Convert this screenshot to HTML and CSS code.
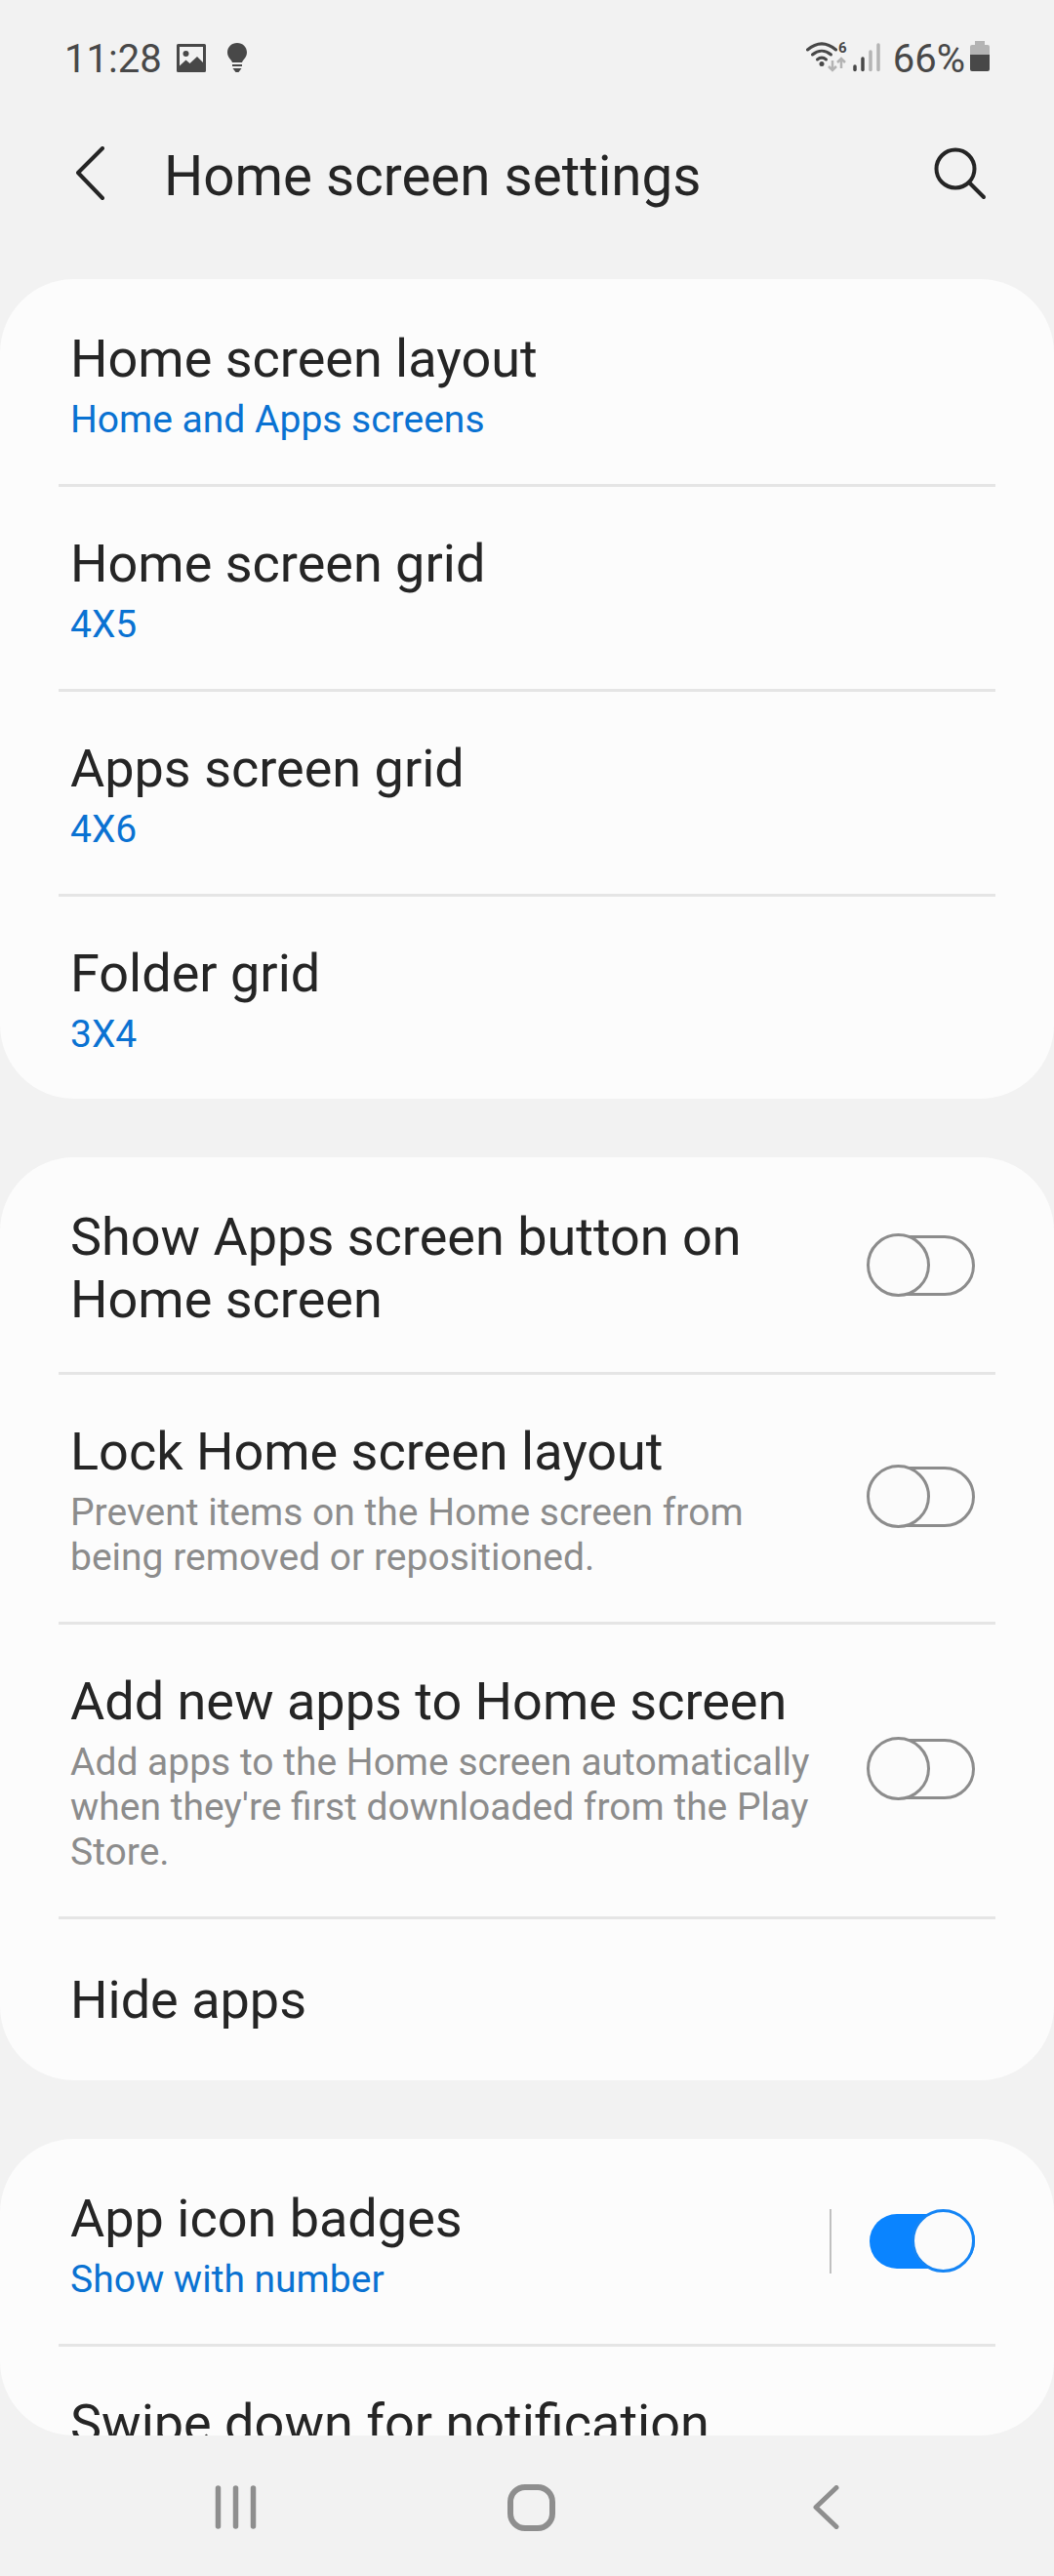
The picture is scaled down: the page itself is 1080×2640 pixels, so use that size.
FILE: index.html
```html
<!DOCTYPE html>
<html lang="en">
<head>
    <meta charset="UTF-8">
    <meta name="viewport" content="width=device-width, initial-scale=1.0">
    <title>Home screen settings</title>
    <link rel="stylesheet" href="styles.css">
</head>
<body>
    <div class="phone">
        <div class="statusbar">
            <div class="status-left">
                <span class="clock">11:28</span>
                <svg class="ic-gallery" width="30" height="29" viewBox="0 0 30 29">
                    <path fill="#484848" fill-rule="evenodd" d="M1.500 0h27A1.500 1.500 0 0 1 30 1.500v26a1.500 1.500 0 0 1-1.500 1.500h-27A1.500 1.500 0 0 1 0 27.500v-26A1.500 1.500 0 0 1 1.500 0zM3 3v19.500l6.500-6 4 3.500 7.500-7 6 6V3z"/>
                    <circle cx="9.500" cy="10" r="3" fill="#484848"/>
                </svg>
                <svg class="ic-bulb" width="22" height="30" viewBox="0 0 22 30">
                    <path fill="#484848" d="M11 0c5.600 0 10 4.200 10 9.700 0 3.300-1.700 5.500-3.400 7.500-.9 1-1.400 1.800-1.600 2.800H6c-.2-1-.7-1.800-1.600-2.800C2.700 15.200 1 13 1 9.700 1 4.200 5.400 0 11 0z"/>
                    <rect x="6" y="22" width="10" height="2" fill="#484848"/>
                    <path fill="#484848" d="M6.500 26h9L12.500 30h-3z"/>
                </svg>
            </div>
            <div class="status-right">
                <svg class="ic-wifi" width="42" height="34" viewBox="0 -2 42 34">
                    <g fill="none" stroke="#484848" stroke-width="3" stroke-linecap="round">
                        <path d="M1.500 9C11 1 21 1 30.500 9"/>
                        <path d="M6.500 14c6-5 13-5 19 0"/>
                        <path d="M11.500 19c3-2.500 6-2.500 9 0"/>
                    </g>
                    <circle cx="16" cy="23.500" r="2.500" fill="#484848"/>
                    <text x="33" y="12" class="wifi-six">6</text>
                    <path fill="none" stroke="#b4b4b4" stroke-width="2.500" d="M27 20v10m-4-4 4 4 4-4"/>
                    <path fill="none" stroke="#b4b4b4" stroke-width="2.500" d="M36 28V18m-4 4 4-4 4 4"/>
                </svg>
                <svg class="ic-signal" width="28" height="30" viewBox="0 0 28 30">
                    <g fill="none" stroke-width="3.500" stroke-linecap="round">
                        <path stroke="#484848" d="M2 24v3.500"/>
                        <path stroke="#484848" d="M10 16v11.500"/>
                        <path stroke="#b4b4b4" d="M18 9v18.500"/>
                        <path stroke="#b4b4b4" d="M26 2v25.500"/>
                    </g>
                </svg>
                <span class="battery-text">66%</span>
                <svg class="ic-battery" width="20" height="31" viewBox="0 0 20 31">
                    <path fill="#b4b4b4" d="M5 0h10v4h3a2 2 0 0 1 2 2v8H0V6a2 2 0 0 1 2-2h3z"/>
                    <path fill="#484848" d="M0 14h20v15a2 2 0 0 1-2 2H2a2 2 0 0 1-2-2z"/>
                </svg>
            </div>
        </div>

        <div class="toolbar">
            <svg class="ic-back" width="30" height="56" viewBox="0 0 30 56">
                <path fill="none" stroke="#252525" stroke-width="4" stroke-linecap="round" stroke-linejoin="round" d="M27 2 2 27l25 26"/>
            </svg>
            <h1 class="page-title">Home screen settings</h1>
            <svg class="ic-search" width="54" height="54" viewBox="0 0 54 54">
                <circle cx="22" cy="22" r="19.500" fill="none" stroke="#252525" stroke-width="4"/>
                <path fill="none" stroke="#252525" stroke-width="4" stroke-linecap="round" d="m36 36 15 15"/>
            </svg>
        </div>

        <div class="scroller">
            <div class="card">
                <div class="row">
                    <div class="row-text">
                        <div class="row-title">Home screen layout</div>
                        <div class="row-value">Home and Apps screens</div>
                    </div>
                </div>
                <div class="sep"></div>
                <div class="row">
                    <div class="row-text">
                        <div class="row-title">Home screen grid</div>
                        <div class="row-value">4X5</div>
                    </div>
                </div>
                <div class="sep"></div>
                <div class="row">
                    <div class="row-text">
                        <div class="row-title">Apps screen grid</div>
                        <div class="row-value">4X6</div>
                    </div>
                </div>
                <div class="sep"></div>
                <div class="row">
                    <div class="row-text">
                        <div class="row-title">Folder grid</div>
                        <div class="row-value">3X4</div>
                    </div>
                </div>
            </div>

            <div class="card">
                <div class="row row-two-lines">
                    <div class="row-text">
                        <div class="row-title">Show Apps screen button on Home screen</div>
                    </div>
                    <div class="switch"><div class="knob"></div></div>
                </div>
                <div class="sep"></div>
                <div class="row">
                    <div class="row-text">
                        <div class="row-title">Lock Home screen layout</div>
                        <div class="row-desc">Prevent items on the Home screen from being removed or repositioned.</div>
                    </div>
                    <div class="switch"><div class="knob"></div></div>
                </div>
                <div class="sep"></div>
                <div class="row">
                    <div class="row-text">
                        <div class="row-title">Add new apps to Home screen</div>
                        <div class="row-desc">Add apps to the Home screen automatically when they're first downloaded from the Play Store.</div>
                    </div>
                    <div class="switch"><div class="knob"></div></div>
                </div>
                <div class="sep"></div>
                <div class="row row-single">
                    <div class="row-text">
                        <div class="row-title">Hide apps</div>
                    </div>
                </div>
            </div>

            <div class="card">
                <div class="row">
                    <div class="row-text">
                        <div class="row-title">App icon badges</div>
                        <div class="row-value">Show with number</div>
                    </div>
                    <div class="vline"></div>
                    <div class="switch on"><div class="knob"></div></div>
                </div>
                <div class="sep"></div>
                <div class="row row-cut">
                    <div class="row-text">
                        <div class="row-title">Swipe down for notification panel</div>
                    </div>
                </div>
            </div>
        </div>

        <div class="navbar">
            <svg class="nav-recents" width="43" height="45" viewBox="0 0 43 45">
                <g fill="none" stroke="#8e8e8e" stroke-width="5.500" stroke-linecap="round">
                    <path d="M3.500 3v39"/>
                    <path d="M21.500 3v39"/>
                    <path d="M39.500 3v39"/>
                </g>
            </svg>
            <svg class="nav-home" width="49" height="48" viewBox="0 0 49 48">
                <rect x="3" y="3" width="43" height="42" rx="15" fill="none" stroke="#8e8e8e" stroke-width="6"/>
            </svg>
            <svg class="nav-back" width="27" height="45" viewBox="0 0 27 45">
                <path fill="none" stroke="#8e8e8e" stroke-width="5" stroke-linecap="round" stroke-linejoin="round" d="M24 2.500 3 22.500l21 20"/>
            </svg>
        </div>
    </div>
</body>
</html>
```

FILE: styles.css
```css
html, body {
    margin: 0;
    padding: 0;
}
body {
    background: #f2f2f2;
    font-family: Roboto, "Liberation Sans", sans-serif;
}
.phone {
    width: 1080px;
    height: 2640px;
    display: flex;
    flex-direction: column;
    background: #f2f2f2;
    overflow: hidden;
}
.statusbar {
    height: 118px;
    flex: none;
    box-sizing: border-box;
    padding: 42px 66px 0 66px;
    display: flex;
    justify-content: space-between;
    align-items: flex-start;
    color: #484848;
}
.status-left, .status-right {
    display: flex;
    align-items: center;
    height: 34px;
}
.clock, .battery-text {
    font-size: 40px;
    line-height: 34px;
    padding-top: 3px;
}
.ic-gallery {
    margin-left: 15px;
}
.ic-bulb {
    margin-left: 21px;
}
.ic-wifi {
    margin-right: 6px;
    margin-bottom: 4px;
}
.wifi-six {
    font-size: 15px;
    font-weight: 700;
    fill: #484848;
}
.ic-signal {
    margin-right: 13px;
    margin-bottom: 1px;
}
.ic-battery {
    margin-left: 5px;
    margin-bottom: 3px;
}
.toolbar {
    height: 120px;
    flex: none;
    box-sizing: border-box;
    padding: 0 69px 0 78px;
    display: flex;
    align-items: center;
}
.page-title {
    flex: 1;
    margin: 0 0 0 60px;
    padding-top: 5px;
    font-size: 56.5px;
    font-weight: 400;
    color: #252525;
}
.scroller {
    height: 2210px;
    flex: none;
    margin-top: 48px;
    border-radius: 0 0 76px 76px;
    overflow: hidden;
    display: flex;
    flex-direction: column;
    gap: 60px;
}
.card {
    flex: none;
    padding-top: 3px;
    background: #fcfcfc;
    border-radius: 76px;
}
.row {
    display: flex;
    align-items: center;
    padding: 47px 72px 43px 72px;
}
.row-two-lines {
    padding-bottom: 42px;
}
.row-single {
    padding-top: 51px;
    padding-bottom: 50px;
}
.row-cut {
    padding-right: 290px;
}
.row-text {
    flex: 1;
    min-width: 0;
}
.row-title {
    font-size: 54px;
    line-height: 64px;
    color: #252525;
}
.row-value, .row-desc {
    margin-top: 7px;
    font-size: 39px;
    line-height: 46px;
}
.row-value {
    color: #0a72d2;
}
.row-desc {
    color: #8c8c8c;
}
.sep {
    height: 3px;
    margin: 0 60px;
    background: #e5e5e5;
}
.vline {
    width: 2px;
    height: 66px;
    margin-right: 39px;
    margin-bottom: 7px;
    background: #c0c0c0;
}
.switch {
    position: relative;
    flex: none;
    box-sizing: border-box;
    width: 108px;
    height: 62px;
    margin: 0 9px 7px 47px;
    border: 3px solid #8c8c8c;
    border-radius: 31px;
}
.knob {
    position: absolute;
    left: -6px;
    top: -5px;
    box-sizing: border-box;
    width: 65px;
    height: 65px;
    border: 3px solid #8c8c8c;
    border-radius: 50%;
    background: #fbfbfb;
}
.switch.on {
    height: 56px;
    margin-left: 0;
    border: none;
    border-radius: 28px;
    background: #0a84ff;
}
.switch.on .knob {
    left: 43px;
    top: -5px;
    border-color: #1585f5;
}
.navbar {
    flex: 1;
    display: flex;
    align-items: center;
    box-sizing: border-box;
    padding: 3px 0 0 220px;
}
.nav-home {
    margin-left: 257px;
}
.nav-back {
    margin-left: 264px;
}
```
